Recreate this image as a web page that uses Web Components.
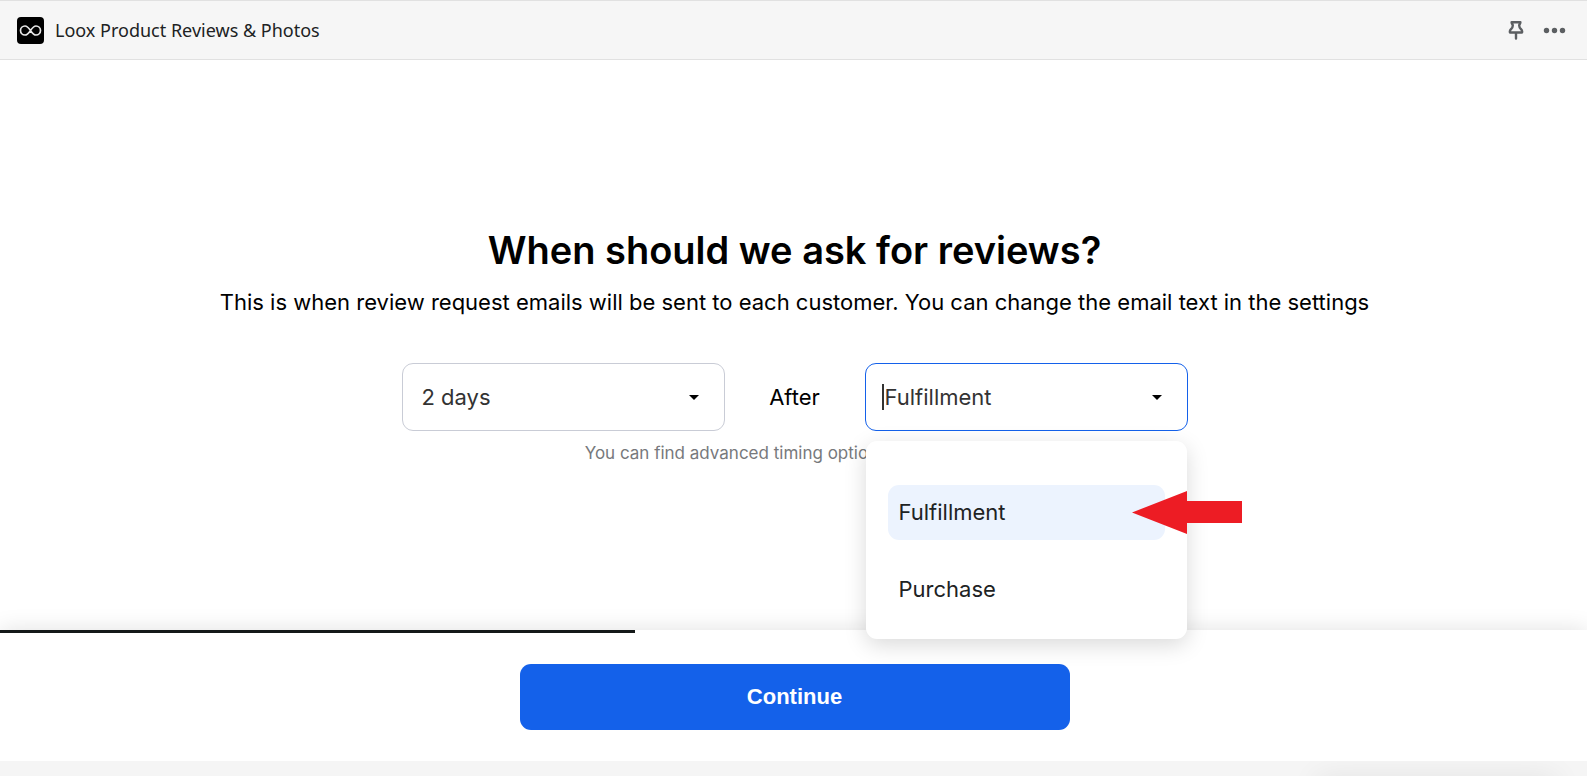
<!DOCTYPE html>
<html lang="en">
<head>
<meta charset="utf-8">
<meta name="viewport" content="width=device-width, initial-scale=1">
<title>Loox Product Reviews &amp; Photos</title>
<style>
  * { box-sizing: border-box; }
  body {
    background: #fff;
    color: #000;
    display: flex;
    flex-direction: column;
    font-family: Inter, "Liberation Sans", sans-serif;
    font-size: 22px;
    margin: 0;
    min-height: 100vh;
  }
</style>
</head>
<body>
<app-bar>Loox Product Reviews &amp; Photos</app-bar>
<review-step>
  <span slot="title">When should we ask for reviews?</span>
  <span slot="text">This is when review request emails will be sent to each customer. You can change the email text in the settings</span>
  <drop-down label="Delay" options="2 days"></drop-down>
  <span>After</span>
  <drop-down label="Event" options="Fulfillment,Purchase" open></drop-down>
  <span slot="hint">You can find advanced timing options in the settings</span>
</review-step>
<step-footer progress="40">Continue</step-footer>
<page-edge></page-edge>

<script>
class AppBar extends HTMLElement {
  constructor() {
    super();
    this.attachShadow({ mode: "open" });
    this.shadowRoot.innerHTML = `
      <style>
        :host {
          align-items: center;
          background: #f6f6f6;
          border-bottom: 1px solid #e1e1e1;
          border-top: 1px solid #e1e1e1;
          box-sizing: border-box;
          color: #202223;
          display: flex;
          font-family: "Noto Sans", "Open Sans", sans-serif;
          font-size: 18px;
          height: 60px;
          line-height: 26px;
          padding: 0 20px 0 17px;
        }
        .title { flex: 1; margin-left: 11px; }
        button {
          background: none;
          border: 0;
          color: #5c5f62;
          cursor: pointer;
          display: flex;
          padding: 0;
        }
        button + button { margin-left: 19px; }
        svg { display: block; }
      </style>
      <svg width="27" height="27" viewBox="0 0 27 27" aria-hidden="true">
        <rect width="27" height="27" rx="4" fill="#000"/>
        <path d="M13.5 13.5C11.8 11 10.5 9 8 9a4.5 4.5 0 0 0 0 9c2.5 0 3.8-2 5.5-4.5S16.5 9 19 9a4.5 4.5 0 0 1 0 9c-2.500 0-3.800-2-5.500-4.500z" fill="none" stroke="#e8e8e8" stroke-width="1.700"/>
      </svg>
      <span class="title"><slot></slot></span>
      <button type="button" aria-label="Pin app">
        <svg width="16" height="20" viewBox="0 0 16 20" fill="none" stroke="currentColor" stroke-width="2.400" stroke-linejoin="round" stroke-linecap="round">
          <path d="M3.600 2.200h8.800c.2 1.500-1.200 1.800-1.200 3.200 0 2.400.8 3 2.200 4.200.8.700 1 2.900.4 2.900H2.200c-.6 0-.4-2.200.4-2.900C4 8.400 4.800 7.800 4.800 5.400c0-1.400-1.400-1.700-1.200-3.200zM8 12.500v6"/>
        </svg>
      </button>
      <button type="button" aria-label="More actions">
        <svg width="24" height="20" viewBox="0 0 24 20" fill="currentColor">
          <circle cx="3.500" cy="10.500" r="2.700"/>
          <circle cx="11.500" cy="10.500" r="2.700"/>
          <circle cx="19.500" cy="10.500" r="2.700"/>
        </svg>
      </button>
    `;
  }
}

class ReviewStep extends HTMLElement {
  constructor() {
    super();
    this.attachShadow({ mode: "open" });
    this.shadowRoot.innerHTML = `
      <style>
        :host {
          align-items: center;
          display: flex;
          flex: 1;
          flex-direction: column;
          justify-content: center;
          padding-left: 2px;
          text-align: center;
        }
        h1 {
          font-size: 38px;
          font-weight: 600;
          line-height: 48px;
          margin: 0;
        }
        p { line-height: 28px; margin: 14px 0 47px; }
        .row {
          display: grid;
          grid-template-columns: 323px 140px 323px;
          align-items: center;
        }
        small {
          color: #77797c;
          font-size: 17px;
          line-height: 24px;
          margin-top: 10px;
        }
      </style>
      <h1><slot name="title"></slot></h1>
      <p><slot name="text"></slot></p>
      <div class="row"><slot></slot></div>
      <small><slot name="hint"></slot></small>
    `;
  }
}

class DropDown extends HTMLElement {
  constructor() {
    super();
    this.attachShadow({ mode: "open" });
    this.shadowRoot.innerHTML = `
      <style>
        :host { display: block; position: relative; text-align: left; }
        select {
          appearance: none;
          background: #fff;
          border: 1px solid #c9ccd6;
          border-radius: 11px;
          box-sizing: border-box;
          color: #333;
          display: block;
          font: inherit;
          height: 68px;
          outline: 0;
          padding: 0 48px 0 19px;
          width: 100%;
        }
        :host([open]) select { border-color: #1461ea; }
        .arrow {
          border: 5px solid transparent;
          border-bottom: 0;
          border-top-color: #000;
          pointer-events: none;
          position: absolute;
          right: 26px;
          top: 32px;
        }
        .caret, .menu, pointer-arrow { display: none; }
        :host([open]) .caret {
          background: #333;
          display: block;
          height: 26px;
          left: 17px;
          position: absolute;
          top: 21px;
          width: 2px;
        }
        :host([open]) .menu {
          background: #fff;
          border-radius: 11px;
          box-shadow: 0 6px 22px rgba(0, 0, 0, .15);
          display: grid;
          gap: 22px;
          left: 1px;
          padding: 44px 22px 22px;
          position: absolute;
          right: 1px;
          top: 78px;
          z-index: 2;
        }
        .menu button {
          background: none;
          border: 0;
          border-radius: 11px;
          color: #202223;
          cursor: pointer;
          font: inherit;
          height: 55px;
          padding: 0 11px;
          text-align: left;
        }
        .menu button[aria-selected="true"] { background: #ecf3fe; }
        :host([open]) pointer-arrow {
          display: block;
          left: 267px;
          position: absolute;
          top: 128px;
          z-index: 3;
        }
      </style>
      <select></select>
      <span class="arrow"></span>
      <span class="caret"></span>
      <div class="menu" role="listbox"></div>
      <pointer-arrow></pointer-arrow>
    `;
  }

  connectedCallback() {
    const select = this.shadowRoot.querySelector("select");
    const menu = this.shadowRoot.querySelector(".menu");
    const label = this.getAttribute("label");

    select.setAttribute("aria-label", label);
    menu.setAttribute("aria-label", label);

    this.getAttribute("options").split(",").forEach((text) => {
      select.add(new Option(text));
      if (!this.hasAttribute("open")) return;

      const item = document.createElement("button");
      item.type = "button";
      item.setAttribute("role", "option");
      item.textContent = text;
      item.addEventListener("click", () => {
        select.value = text;
        this._update();
      });
      menu.appendChild(item);
    });
    select.addEventListener("change", this._update.bind(this));
    this._update();
  }

  _update() {
    const value = this.shadowRoot.querySelector("select").value;
    this.shadowRoot.querySelectorAll(".menu button").forEach((item) => {
      item.setAttribute("aria-selected", item.textContent === value);
    });
  }
}

class PointerArrow extends HTMLElement {
  constructor() {
    super();
    this.attachShadow({ mode: "open" });
    this.shadowRoot.innerHTML = `
      <style>
        :host { display: block; pointer-events: none; }
        svg { display: block; }
      </style>
      <svg width="110" height="43" viewBox="0 0 110 43" aria-hidden="true">
        <path d="M0 21.500 55 0v10h55v22H55v11z" fill="#ed1c24"/>
      </svg>
    `;
  }
}

class StepFooter extends HTMLElement {
  constructor() {
    super();
    this.attachShadow({ mode: "open" });
    this.shadowRoot.innerHTML = `
      <style>
        :host {
          background: #fff;
          box-shadow: 0 0 22px rgba(0, 0, 0, .12);
          display: block;
        }
        .progress { background: #141818; height: 3px; }
        .actions {
          display: flex;
          justify-content: center;
          padding: 31px 22px 31px 24px;
        }
        button {
          background: #1461ea;
          border: 0;
          border-radius: 11px;
          color: #fff;
          cursor: pointer;
          font: bold 22px "Liberation Sans", Arial, sans-serif;
          height: 66px;
          max-width: 550px;
          width: 100%;
        }
      </style>
      <div class="progress"></div>
      <div class="actions"><button type="button"><slot></slot></button></div>
    `;
  }

  connectedCallback() {
    this.shadowRoot.querySelector(".progress").style.width = this.getAttribute("progress") + "%";
  }
}

class PageEdge extends HTMLElement {
  constructor() {
    super();
    this.attachShadow({ mode: "open" });
    this.shadowRoot.innerHTML = `
      <style>
        :host {
          background: #f5f5f5;
          display: flex;
          height: 15px;
          justify-content: flex-end;
          overflow: hidden;
          position: relative;
        }
        /* shadow of the panel below the fold */
        span {
          box-shadow: 0 0 30px rgba(0, 0, 0, .07);
          height: 40px;
          margin: 15px 30px 0 0;
          width: 240px;
        }
      </style>
      <span></span>
    `;
  }
}

customElements.define("app-bar", AppBar);
customElements.define("review-step", ReviewStep);
customElements.define("pointer-arrow", PointerArrow);
customElements.define("drop-down", DropDown);
customElements.define("step-footer", StepFooter);
customElements.define("page-edge", PageEdge);
</script>
</body>
</html>
